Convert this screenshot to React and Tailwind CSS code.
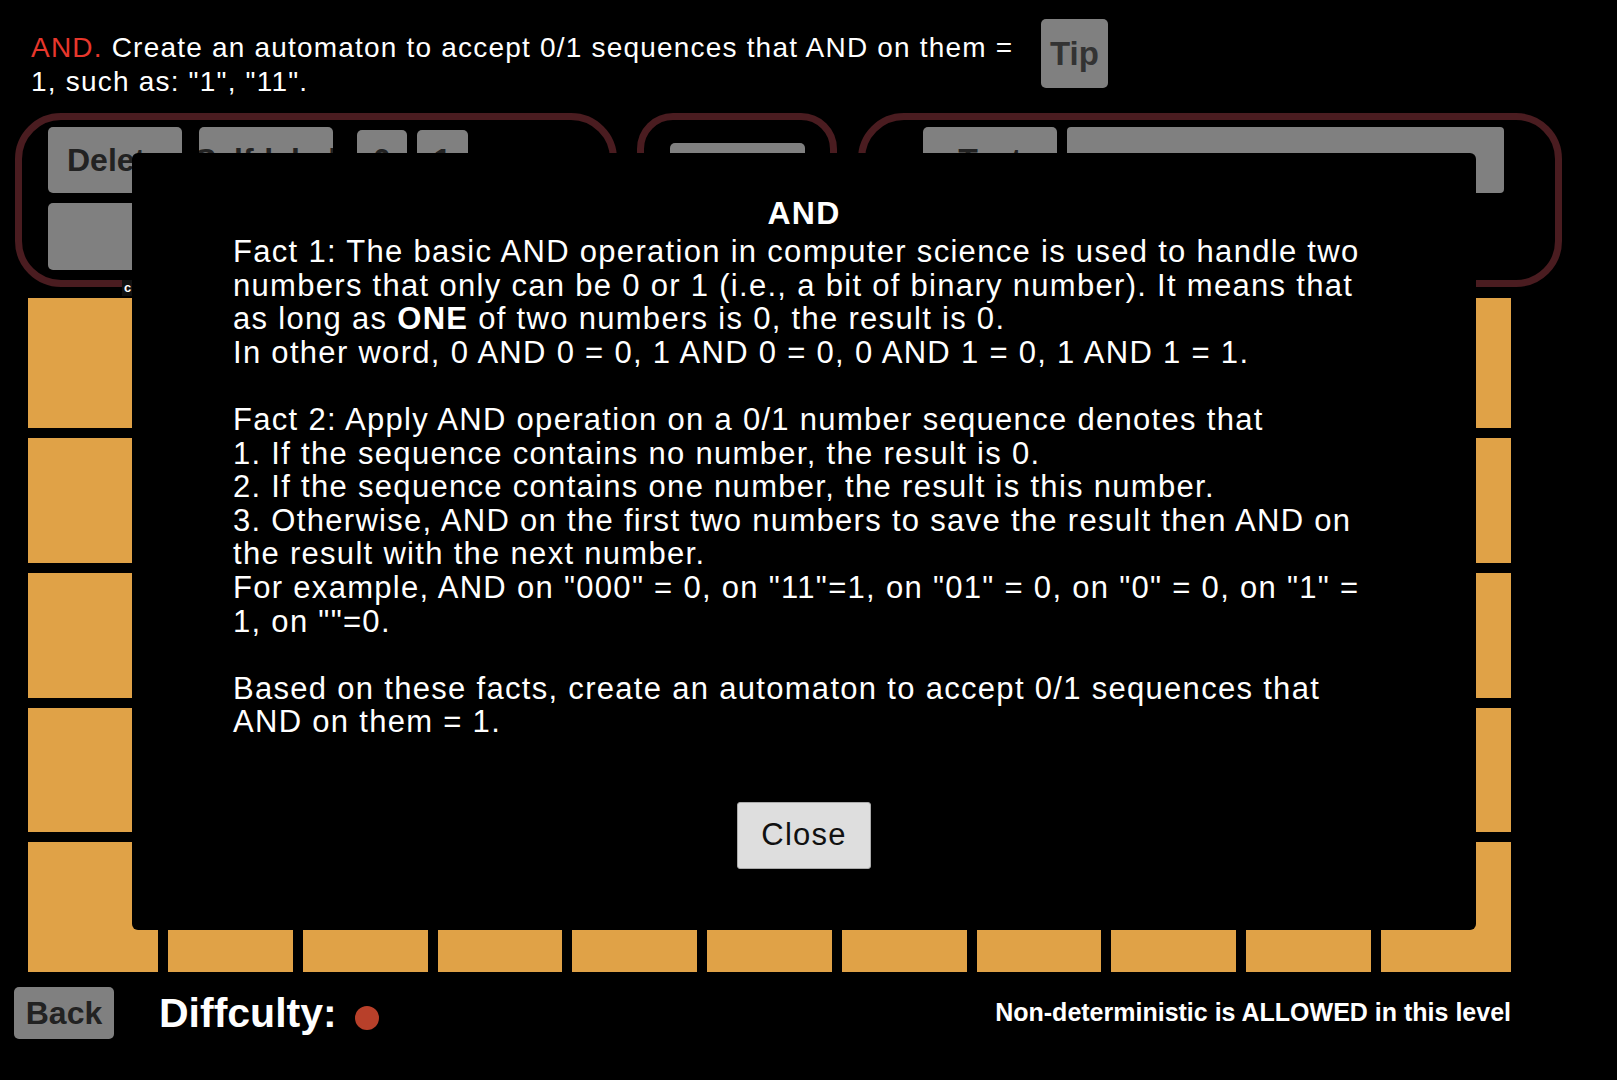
import React from 'react';

const font = "font-['Liberation_Sans',Arial,sans-serif]";

const GrayBtn = ({ className = '', children }) => (
  <div className={`bg-[#808080] rounded-[5px] text-[#222] font-bold text-[32px] flex items-center justify-center overflow-hidden whitespace-nowrap ${className}`}>
    {children}
  </div>
);

const Tile = ({ className = '' }) => <div className={`bg-[#e0a247] ${className}`} />;

const Column = () => (
  <div className="flex flex-col gap-[10px] w-[130px]">
    <Tile className="h-[130px]" />
    <Tile className="h-[125px]" />
    <Tile className="h-[125px]" />
    <Tile className="h-[124px]" />
    <Tile className="h-[86px]" />
  </div>
);

const body = [
  <>Fact 1: The basic AND operation in computer science is used to handle two</>,
  <>numbers that only can be 0 or 1 (i.e., a bit of binary number). It means that</>,
  <>as long as <b>ONE</b> of two numbers is 0, the result is 0.</>,
  <>In other word, 0 AND 0 = 0, 1 AND 0 = 0, 0 AND 1 = 0, 1 AND 1 = 1.</>,
  null,
  <>Fact 2: Apply AND operation on a 0/1 number sequence denotes that</>,
  <>1. If the sequence contains no number, the result is 0.</>,
  <>2. If the sequence contains one number, the result is this number.</>,
  <>3. Otherwise, AND on the first two numbers to save the result then AND on</>,
  <>the result with the next number.</>,
  <>For example, AND on "000" = 0, on "11"=1, on "01" = 0, on "0" = 0, on "1" =</>,
  <>1, on ""=0.</>,
  null,
  <>Based on these facts, create an automaton to accept 0/1 sequences that</>,
  <>AND on them = 1.</>,
];

export default function App() {
  return (
    <div className={`relative w-[1617px] h-[1080px] bg-black overflow-hidden ${font}`}>
      {/* header */}
      <div className="flex items-start pl-[31px] pt-[19px]">
        <div className="mt-[12px] w-[990px] text-white text-[28px] leading-[34px] tracking-[1.2px]">
          <span className="text-[#e8372c]">AND.</span> Create an automaton to accept 0/1 sequences that AND on them =<br />
          1, such as: "1", "11".
        </div>
        <GrayBtn className="ml-[20px] w-[67px] h-[69px] text-[33px] text-[#333]">Tip</GrayBtn>
      </div>

      {/* tool panels */}
      <div className="flex mt-[14px] pl-[15px]">
        <div className="relative w-[602px] h-[174px] border-[7px] border-[#4a1c20] rounded-[46px] pl-[26px] pt-[7px]">
          <div className="flex items-start">
            <GrayBtn className="w-[134px] h-[66px]">Delete</GrayBtn>
            <GrayBtn className="ml-[17px] w-[134px] h-[66px] text-[27px]">Self-label</GrayBtn>
            <GrayBtn className="ml-[24px] mt-[3px] w-[50px] h-[60px]">0</GrayBtn>
            <GrayBtn className="ml-[10px] mt-[3px] w-[51px] h-[60px]">1</GrayBtn>
          </div>
          <GrayBtn className="mt-[10px] w-[290px] h-[67px]">Add</GrayBtn>
          <span className="absolute left-[100px] bottom-[-16px] bg-[#111] px-[2px] text-white text-[13px] font-bold leading-[16px]">c</span>
        </div>
        <div className="ml-[20px] w-[200px] h-[174px] border-[7px] border-[#4a1c20] rounded-[36px] pl-[26px] pt-[23px]">
          <GrayBtn className="w-[135px] h-[66px]">Run</GrayBtn>
        </div>
        <div className="ml-[21px] w-[704px] h-[174px] border-[7px] border-[#4a1c20] rounded-[46px] pl-[58px] pt-[7px]">
          <div className="flex">
            <GrayBtn className="w-[134px] h-[66px]">Test</GrayBtn>
            <div className="ml-[10px] w-[437px] h-[66px] bg-[#808080] rounded-[4px]" />
          </div>
        </div>
      </div>

      {/* board */}
      <div className="ml-[28px] mt-[11px] w-[1483px]">
        <div className="flex justify-between">
          <Column />
          <Column />
        </div>
        <div className="flex gap-[10px] h-[44px]">
          <Tile className="w-[130px]" />
          {Array.from({ length: 9 }).map((_, i) => (
            <Tile key={i} className="flex-1" />
          ))}
          <Tile className="w-[130px]" />
        </div>
      </div>

      {/* footer */}
      <div className="flex items-center mt-[15px] pl-[14px] pr-[106px]">
        <GrayBtn className="w-[100px] h-[52px] text-[32px] text-[#111]">Back</GrayBtn>
        <span className="ml-[45px] text-white font-bold text-[41px] leading-none">Diffculty:</span>
        <span className="ml-[18px] mt-[10px] w-[24px] h-[24px] rounded-full bg-[#b8402a]" />
        <span className="ml-auto text-white font-bold text-[25px]">Non-deterministic is ALLOWED in this level</span>
      </div>

      {/* tip dialog */}
      <div className="absolute left-[132px] top-[153px] w-[1344px] h-[777px] bg-black rounded-[6px] pt-[42px]">
        <div className="text-center text-white font-bold text-[32px] leading-[37px] tracking-[1.3px]">AND</div>
        <div className="mt-[3px] pl-[101px] text-white text-[31px] leading-[33.6px] tracking-[1.3px]">
          {body.map((line, i) => (
            <div key={i} className="whitespace-nowrap h-[33.6px]">{line}</div>
          ))}
        </div>
        <div className="flex justify-center mt-[63px]">
          <div className="w-[134px] h-[67px] bg-[#dedede] border border-[#aaa] rounded-[3px] flex items-center justify-center text-[#111] text-[31px] tracking-[1.2px]">
            Close
          </div>
        </div>
      </div>
    </div>
  );
}
